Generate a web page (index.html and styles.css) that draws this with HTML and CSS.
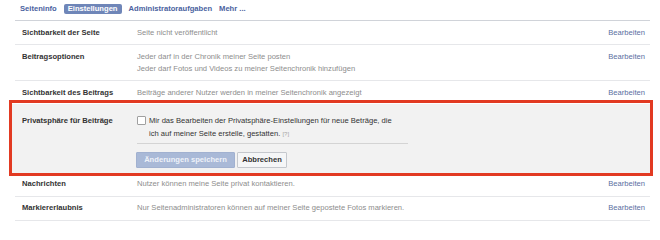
FILE: index.html
```html
<!DOCTYPE html>
<html lang="de">
<head>
<meta charset="utf-8">
<title>Einstellungen</title>
<link rel="stylesheet" href="styles.css">
</head>
<body>
<nav class="tabs">
  <a class="tab">Seiteninfo</a>
  <a class="tab tab-active">Einstellungen</a>
  <a class="tab">Administratoraufgaben</a>
  <a class="tab">Mehr ...</a>
</nav>
<div class="settings">
  <div class="row">
    <div class="label">Sichtbarkeit der Seite</div>
    <div class="value">Seite nicht veröffentlicht</div>
    <a class="edit">Bearbeiten</a>
  </div>
  <div class="row">
    <div class="label">Beitragsoptionen</div>
    <div class="value">Jeder darf in der Chronik meiner Seite posten<br>Jeder darf Fotos und Videos zu meiner Seitenchronik hinzufügen</div>
    <a class="edit">Bearbeiten</a>
  </div>
  <div class="row row-open-before">
    <div class="label">Sichtbarkeit des Beitrags</div>
    <div class="value">Beiträge anderer Nutzer werden in meiner Seitenchronik angezeigt</div>
    <a class="edit">Bearbeiten</a>
  </div>
  <div class="row-edit">
    <div class="label">Privatsphäre für Beiträge</div>
    <div class="edit-body">
      <label class="check">
        <span class="box"></span>
        <span class="check-text">Mir das Bearbeiten der Privatsphäre-Einstellungen für neue Beträge, die<br>ich auf meiner Seite erstelle, gestatten. <span class="help">[?]</span></span>
      </label>
      <div class="actions">
        <button class="btn btn-save" type="button">Änderungen speichern</button>
        <button class="btn btn-cancel" type="button">Abbrechen</button>
      </div>
    </div>
  </div>
  <div class="row">
    <div class="label">Nachrichten</div>
    <div class="value">Nutzer können meine Seite privat kontaktieren.</div>
    <a class="edit">Bearbeiten</a>
  </div>
  <div class="row">
    <div class="label">Markiererlaubnis</div>
    <div class="value">Nur Seitenadministratoren können auf meiner Seite gepostete Fotos markieren.</div>
    <a class="edit">Bearbeiten</a>
  </div>
</div>
</body>
</html>
```
FILE: styles.css
```css
html, body {
  margin: 0;
  padding: 0;
  background: #ffffff;
}
body {
  font-family: "Liberation Sans", Arial, sans-serif;
  font-size: 7.6px;
  color: #333333;
  overflow: hidden;
}
.tabs {
  display: flex;
  align-items: center;
  gap: 7px;
  height: 17px;
  padding: 0 0 3px 20px;
}
.tab {
  font-weight: bold;
  color: #4a62a0;
  line-height: 10px;
}
.tab-active {
  background: #6f86b8;
  color: #ffffff;
  padding: 0 4px;
  border-radius: 2px;
  line-height: 10px;
  height: 10px;
}
.settings {
  margin-left: 15px;
  width: 635px;
  border-top: 1px solid #d0d3d9;
}
.row {
  display: flex;
  align-items: flex-start;
  padding: 5.5px 5px 5.5px 7px;
  line-height: 12px;
  border-bottom: 1px solid #e6e7ea;
}
.row-open-before {
  border-bottom: none;
}
.label {
  width: 115px;
  flex: none;
  font-weight: bold;
  color: #333333;
}
.value {
  flex: 1;
  color: #8d8d8d;
}
.edit {
  flex: none;
  color: #5a6f9f;
}
.row-edit {
  position: relative;
  display: flex;
  align-items: flex-start;
  margin-left: -3px;
  padding: 9.5px 0 5px 10px;
  background: #f2f2f2;
  line-height: 13px;
}
.row-edit::after {
  content: "";
  position: absolute;
  top: -4px;
  left: -3px;
  right: -3px;
  bottom: -3px;
  border: 3px solid #e23a22;
  pointer-events: none;
}
.row-edit .label {
  line-height: 13px;
}
.edit-body {
  display: flex;
  flex-direction: column;
  width: 271px;
}
.check {
  display: flex;
  align-items: flex-start;
  gap: 3px;
  color: #333333;
  padding-bottom: 2px;
  border-bottom: 1px solid #d4d4d4;
}
.box {
  flex: none;
  width: 7px;
  height: 7px;
  margin-top: 2.5px;
  background: #ffffff;
  border: 1px solid #a0a0a0;
  border-radius: 1px;
}
.help {
  color: #a5a5a5;
  font-size: 6px;
}
.actions {
  display: flex;
  gap: 2px;
  margin-top: 8px;
  margin-left: -1px;
}
.btn {
  font-family: "Liberation Sans", Arial, sans-serif;
  font-size: 7.6px;
  font-weight: bold;
  height: 16px;
  line-height: 14px;
  margin: 0;
  border-radius: 1px;
  cursor: default;
}
.btn-save {
  width: 99px;
  padding: 0;
  background: #a9b9d7;
  border: 1px solid #a1b1d0;
  color: #eef2f9;
}
.btn-cancel {
  width: 50px;
  padding: 0;
  background: #f5f6f7;
  border: 1px solid #c5c8cd;
  color: #333333;
}
```
